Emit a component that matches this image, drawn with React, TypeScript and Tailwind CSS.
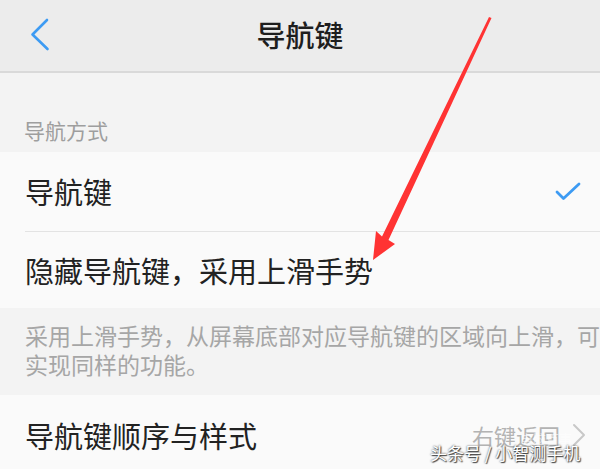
export default function App() {
  const font = { fontFamily: '"Noto Sans CJK SC", "Noto Sans", sans-serif' };
  return (
    <div className="relative w-[600px] h-[469px] overflow-hidden bg-[#f3f3f3]" style={font}>
      {/* header */}
      <div className="relative flex h-[73px] items-center justify-center border-b-2 border-[#d9d9d9] bg-[#ececec]">
        <svg className="absolute left-[28px] top-[17px]" width="24" height="36" viewBox="0 0 24 36">
          <path d="M19 3 L4.5 17.5 L19.5 32" fill="none" stroke="#3d9bf3" strokeWidth="2.6" strokeLinecap="round" strokeLinejoin="round" />
        </svg>
        <h1 className="text-[29px] font-medium leading-none text-[#1e1e1e] -mt-[2px]">导航键</h1>
      </div>

      {/* section label */}
      <div className="flex h-[79px] items-end pb-[11px] pl-[24px] text-[21px] leading-none text-[#9e9e9e]">
        导航方式
      </div>

      {/* options */}
      <div className="bg-[#fafafa]">
        <div className="flex h-[79px] items-center justify-between pl-[25px] pr-[18px]">
          <span className="text-[29px] leading-none text-[#222]">导航键</span>
          <svg width="28" height="22" viewBox="0 0 28 22">
            <path d="M3 11 L9.5 17.5 L25 3" fill="none" stroke="#3d9bf3" strokeWidth="2.8" strokeLinecap="round" strokeLinejoin="round" />
          </svg>
        </div>
        <div className="ml-[25px] h-px bg-[#e3e3e3]" />
        <div className="flex h-[76px] items-center pl-[25px]">
          <span className="text-[29px] leading-none text-[#222]">隐藏导航键，采用上滑手势</span>
        </div>
      </div>

      {/* description */}
      <div className="h-[87px] pl-[25px] pt-[13px] text-[23px] leading-[29px] text-[#a6a6a6] whitespace-nowrap">
        采用上滑手势，从屏幕底部对应导航键的区域向上滑，可
        <br />
        实现同样的功能。
      </div>

      {/* order & style */}
      <div className="flex h-[80px] items-center justify-between bg-[#fafafa] pl-[25px] pr-[14px]">
        <span className="text-[29px] leading-none text-[#222]">导航键顺序与样式</span>
        <div className="flex items-center gap-[12px]">
          <span className="text-[22px] leading-none text-[#b3b3b3]">右键返回</span>
          <svg width="14" height="24" viewBox="0 0 14 24">
            <path d="M2 2 L12 12 L2 22" fill="none" stroke="#c8c8c8" strokeWidth="2" strokeLinecap="round" strokeLinejoin="round" />
          </svg>
        </div>
      </div>

      {/* red annotation arrow */}
      <svg className="absolute left-0 top-0 pointer-events-none" width="600" height="469" viewBox="0 0 600 469">
        <path d="M489 17 L491.5 18 L388.5 240 L395 244 L373 260 L376 231 L382 236.5 Z" fill="#ff3333" />
      </svg>

      {/* watermark */}
      <div className="absolute left-[520px] top-[432px] text-[13px] leading-none text-white/60">电脑百事</div>
      <div className="absolute left-[430px] top-[444px] text-[17px] leading-none text-white [text-shadow:0_0_2px_#333,1px_1px_1px_#444]">
        头条号 / 小智测手机
      </div>
    </div>
  );
}
